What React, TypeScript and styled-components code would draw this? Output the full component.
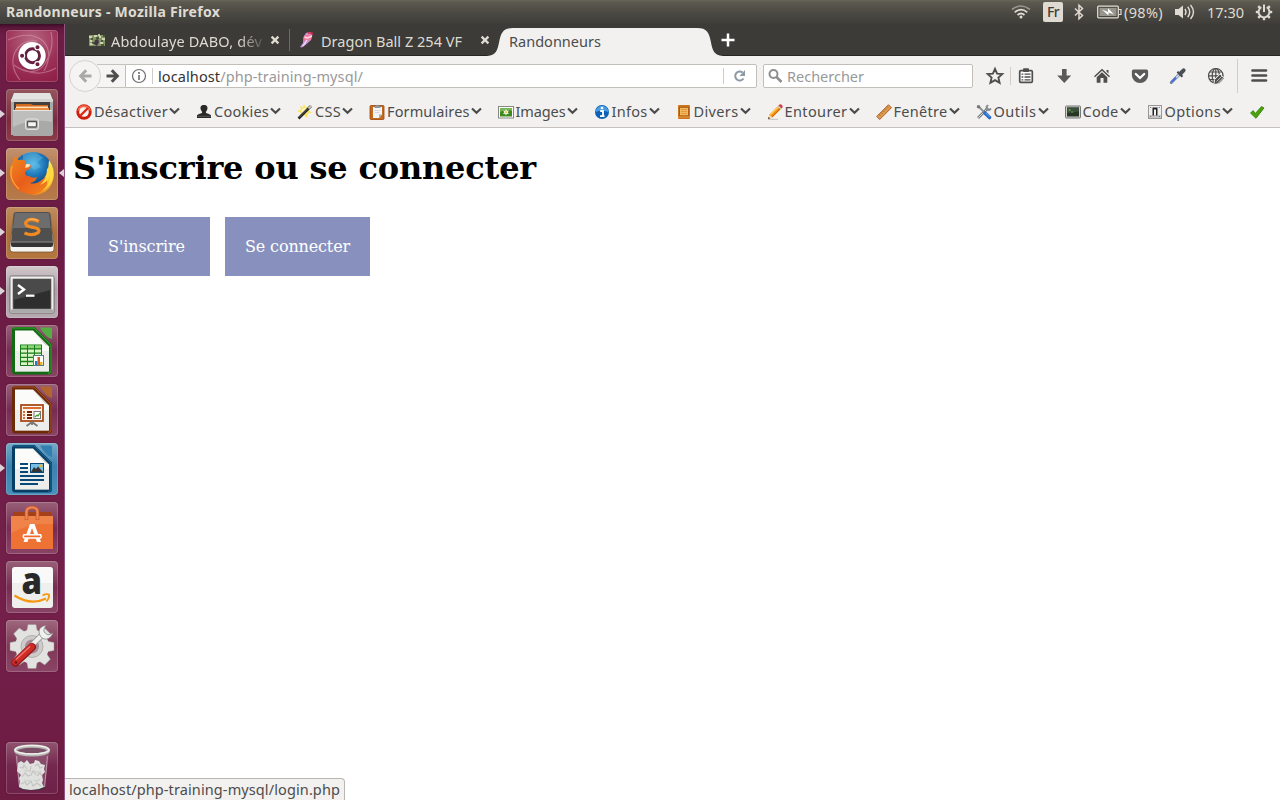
import React, { useLayoutEffect, useRef, useState } from "react";
import styled, { createGlobalStyle, css } from "styled-components";

const GlobalStyle = createGlobalStyle`
  * { box-sizing: border-box; }
  html, body { margin: 0; padding: 0; background: #fff; }
  body { overflow: hidden; font-family: "Noto Sans", "Open Sans", sans-serif; font-size: 14.5px; }
  svg { display: block; flex: none; overflow: visible; }
`;

/* ---------- text that keeps a fixed advance width ---------- */

const FitBox = styled.span<{ $w: number }>`
  display: block;
  flex: none;
  width: ${(p) => p.$w}px;
  white-space: pre;
  overflow: visible;
`;

function Fit({ w, children }: { w: number; children: React.ReactNode }) {
  const ref = useRef<HTMLSpanElement>(null);
  const [spacing, setSpacing] = useState(0);
  useLayoutEffect(() => {
    const el = ref.current;
    if (!el) return;
    const n = (el.textContent || "").length;
    setSpacing((w - el.getBoundingClientRect().width) / n);
  }, [w]);
  return (
    <FitBox $w={w}>
      <span ref={ref} style={{ letterSpacing: spacing }}>{children}</span>
    </FitBox>
  );
}

/* ---------- frame ---------- */

const Desktop = styled.div`
  width: 1280px;
  height: 800px;
  display: flex;
  flex-direction: column;
  overflow: hidden;
`;

const Panel = styled.header`
  height: 24px;
  flex: none;
  display: flex;
  align-items: center;
  padding-left: 6px;
  color: #dfdbd2;
  line-height: 24px;
  background: linear-gradient(#68655a 0, #5c594f 2px, #4b4943 13px, #3e3d39 24px);
`;

const WindowTitle = styled.div`
  flex: 1;
  font-weight: 700;
  font-size: 14px;
`;

const Indicators = styled.div`
  width: 269px;
  height: 24px;
  display: flex;
  align-items: center;
  line-height: 22px;
`;

const Indicator = styled.div<{ $w: number }>`
  width: ${(p) => p.$w}px;
  flex: none;
  display: flex;
`;

const LangBadge = styled.div`
  width: 20px;
  height: 20px;
  border-radius: 2px;
  background: #dfdbd2;
  color: #3d3c38;
  font-size: 14px;
  font-weight: 500;
  line-height: 20px;
  padding-left: 4px;
`;

const Body = styled.div`
  flex: 1;
  min-height: 0;
  display: flex;
`;

/* ---------- launcher ---------- */

const Launcher = styled.nav`
  width: 65px;
  flex: none;
  display: flex;
  flex-direction: column;
  gap: 7px;
  padding: 6px 0 6px 6px;
  border-right: 1px solid #8f5580;
  background: linear-gradient(#3c0d28 0, #64193f 5px, #6d1d45 12px, #6d1d45 300px, #74204b 600px, #6c1b41);
`;

const Tile = styled.div<{ $bg: string; $end?: boolean }>`
  position: relative;
  width: 52px;
  height: 52px;
  flex: none;
  border-radius: 4px;
  background: ${(p) => p.$bg};
  box-shadow: inset 0 0 0 1px rgba(255, 255, 255, 0.18), 0 0 2px rgba(0, 0, 0, 0.25);
  ${(p) => p.$end && css`margin-top: auto;`}
`;

const Pip = styled.i<{ $right?: boolean }>`
  position: absolute;
  top: 21px;
  ${(p) => (p.$right ? "left: 53px;" : "left: -6px;")}
  border: solid transparent;
  border-width: 4.5px 0;
  ${(p) => (p.$right ? "border-right: 5px solid #dcd3d8;" : "border-left: 5px solid #dcd3d8;")}
`;

/* ---------- browser ---------- */

const Browser = styled.div`
  position: relative;
  flex: 1;
  min-width: 0;
  display: flex;
  flex-direction: column;
  color: #4c4c4c;
`;

const TabStrip = styled.div`
  height: 32px;
  flex: none;
  display: flex;
  align-items: center;
  padding: 0 0 0 24px;
  color: #dfdbd2;
  background: #3c3b37;
  box-shadow: inset 0 -1px #272623;
`;

const Tab = styled.div<{ $w: number }>`
  width: ${(p) => p.$w}px;
  height: 32px;
  flex: none;
  display: flex;
  align-items: center;
  position: relative;
`;

const TabTitle = styled.div<{ $w: number; $ml: number; $mr: number; $fade?: boolean }>`
  width: ${(p) => p.$w}px;
  margin: 0 ${(p) => p.$mr}px 0 ${(p) => p.$ml}px;
  position: relative;
  height: 28px;
  line-height: 30px;
  flex: none;
  ${(p) => p.$fade && css`mask-image: linear-gradient(90deg, #000 128px, transparent 156px);`}
`;

const TabDivider = styled.div`
  width: 1px;
  height: 22px;
  margin-right: 10px;
  background: #6b6963;
`;

const ActiveTab = styled(Tab)`
  color: #4c4c4c;
`;

const ActiveShape = styled.svg`
  position: absolute;
  left: -7px;
  top: 0;
`;

const NavBar = styled.div`
  height: 40px;
  flex: none;
  display: flex;
  align-items: center;
  padding-left: 4px;
  background: #f2f1f0;
`;

const BackButton = styled.div`
  width: 32px;
  height: 32px;
  flex: none;
  display: flex;
  align-items: center;
  justify-content: center;
  border: 1px solid #d5d3d0;
  border-radius: 50%;
  background: #f5f4f3;
  position: relative;
`;

const ForwardButton = styled.div`
  width: 28px;
  height: 24px;
  flex: none;
  margin-left: -4px;
  padding-left: 9px;
  display: flex;
  align-items: center;
  border: solid #c6c3bf;
  border-width: 1px 0;
  background: #f6f5f4;
`;

const Field = styled.div<{ $w: number }>`
  width: ${(p) => p.$w}px;
  height: 24px;
  flex: none;
  display: flex;
  align-items: center;
  border: 1px solid #c2bfbb;
  border-radius: 0 2px 2px 0;
  background: #fff;
  line-height: 22px;
  color: #999;
`;

const SearchField = styled(Field)`
  margin-left: 6px;
  border-radius: 2px;
  padding-left: 4px;
  gap: 4px;
`;

const Host = styled.span`
  color: #333;
`;

const Rule = styled.div<{ $h: number; $l: number; $r: number }>`
  width: 1px;
  height: ${(p) => p.$h}px;
  margin: 0 ${(p) => p.$r}px 0 ${(p) => p.$l}px;
  flex: none;
  background: #cfccc9;
`;

const Actions = styled.div`
  display: flex;
  align-items: center;
  gap: 18px;
  margin-left: 1px;
`;

const Spacer = styled.div`
  flex: 1;
`;

const DevBar = styled.div`
  height: 32px;
  flex: none;
  display: flex;
  gap: 16px;
  align-items: center;
  padding-left: 11px;
  border-bottom: 1px solid #c5c2be;
  background: #f2f1f0;
`;

const DevItem = styled.div`
  display: flex;
  align-items: center;
  flex: none;
`;

const DevLabel = styled.div<{ $w: number }>`
  width: ${(p) => p.$w}px;
  height: 24px;
  line-height: 22px;
  margin-left: 2px;
`;

const Page = styled.main`
  flex: 1;
  padding: 21px 8px 0;
  background: #fff;
  font-family: "DejaVu Serif", serif;
`;

const Heading = styled.h1`
  margin: 0;
  height: 38px;
  line-height: 38px;
  font-size: 32px;
  font-weight: 700;
  color: #000;
`;

const Buttons = styled.div`
  display: flex;
  gap: 15px;
  margin: 30px 0 0 15px;
`;

const Button = styled.a<{ $w: number }>`
  width: ${(p) => p.$w}px;
  height: 59px;
  padding: 20px;
  font-size: 16px;
  line-height: 19px;
  white-space: nowrap;
  color: #fff;
  background: #8891be;
`;

const Status = styled.div`
  position: absolute;
  left: 0;
  bottom: 0;
  width: 280px;
  height: 22px;
  padding-left: 4px;
  line-height: 21px;
  border: solid #b9b6b2;
  border-width: 1px 1px 0 0;
  border-radius: 0 4px 0 0;
  background: #f2f1f0;
`;

/* ---------- small icons ---------- */

const Cross = ({ color = "#dfdbd2" }: { color?: string }) => (
  <svg width="10" height="10" viewBox="0 0 10 10">
    <path d="M1.6 1.6 8.4 8.4M8.4 1.6 1.6 8.4" stroke={color} strokeWidth="2.3" />
  </svg>
);

const Chevron = () => (
  <svg width="11" height="10" viewBox="0 0 11 10">
    <path d="M1 1.500 5.500 5.700 10 1.500" fill="none" stroke="#4b4b4b" strokeWidth="2.200" />
  </svg>
);

const Arrow = ({ color, back }: { color: string; back?: boolean }) => (
  <svg width="14" height="14" viewBox="0 0 14 14">
    <g transform={back ? "matrix(-1 0 0 1 14 0)" : undefined} fill="none" stroke={color}>
      <path d="M.5 7H11" strokeWidth="3" />
      <path d="M5.800 1.200 11.300 7 5.800 12.800" strokeWidth="3" />
    </g>
  </svg>
);

const g = "#4e4e4e";

const devIcons: Record<string, React.ReactNode> = {
  stop: (
    <>
      <circle cx="8" cy="8" r="7.7" fill="#cf1d0c" />
      <path d="M1.3 7A6.8 6.8 0 0 1 14.7 7Q8 3 1.3 7" fill="#f36b4d" />
      <circle cx="8" cy="8" r="4.8" fill="#f8f4f2" />
      <path d="M4 12 12 4" stroke="#dc2a14" strokeWidth="2.4" />
    </>
  ),
  person: (
    <>
      <path d="M8 1c3 0 3.8 2 3.4 4-.3 1.700-1.700 2.300-1.500 3.700.2 1 4.600 1 5.100 2.800V14H1v-2.500C1.500 9.700 6 9.700 6.100 8.700 6.300 7.300 4.900 6.700 4.600 5 4.200 3 5 1 8 1Z" fill="#292929" />
      <path d="M1.500 12.300h13" stroke="#666" strokeWidth=".8" />
    </>
  ),
  wand: (
    <>
      <path d="m7 0 1.500 3.400L13 2l-1.500 4L15 9l-4 .5L10 14 7 11l-4 2 .8-4L0 7l4-1.500L3 2l3 1.500Z" fill="#fbe35c" />
      <circle cx="7.500" cy="7" r="3" fill="#fff9bd" />
      <path d="M1.500 14.500 14 2" stroke="#222" strokeWidth="2.600" />
      <path d="m11.500 4.500 3-3" stroke="#c9c9c9" strokeWidth="2" />
      <path d="M2 13.500 11 4.500" stroke="#777" strokeWidth=".7" />
    </>
  ),
  form: (
    <>
      <rect x="1" y="1.500" width="14" height="14" rx="1" fill="#c46a1d" stroke="#98480c" strokeWidth=".8" />
      <path d="M4 3h9v7.500L10 14H4Z" fill="#f4f5f7" />
      <path d="M10 14v-3.500h3Z" fill="#aab0b8" />
      <path d="M5.500 4V2h1.700a1.300 1.300 0 0 1 2.600 0h1.700v2Z" fill="#8f959c" />
      <path d="M5.500 6.500h6M5.500 8.500h5" stroke="#c8ccd2" strokeWidth=".7" />
    </>
  ),
  image: (
    <>
      <rect x=".5" y="2.500" width="15" height="11.500" fill="#fff" stroke="#858783" />
      <rect x="2" y="4" width="12" height="8.500" fill="#3f8a20" />
      <path d="M2 4h12v3Q8 4 2 8Z" fill="#79b655" />
      <path d="m8 5 .9 1.800 2.100-.3-1.300 1.700 1.300 1.600-2.200-.1L8 11.500 7.100 9.700 5 9.800l1.300-1.600L5 6.500l2.100.3Z" fill="#fff" />
      <circle cx="8" cy="8.200" r="1.100" fill="#f2ca24" />
    </>
  ),
  info: (
    <>
      <circle cx="8" cy="8" r="7" fill="#0c61b5" />
      <path d="M1.700 8a6.300 6.300 0 0 1 12.600 0Q8 5 1.700 8" fill="#4a9de5" />
      <circle cx="8" cy="4" r="1.300" fill="#fff" />
      <path d="M6.200 7h2.800v5M6 12.200h4.500" stroke="#fff" strokeWidth="1.800" fill="none" />
    </>
  ),
  misc: (
    <>
      <rect x="2" y="1" width="12" height="14" rx="1" fill="#cb761f" />
      <rect x="3.500" y="3.300" width="9" height="8.500" fill="#f3b95e" stroke="#a9570d" strokeWidth=".9" />
      <path d="M5 5.500h6M5 7.500h6M5 9.500h6" stroke="#d99336" strokeWidth=".8" />
      <path d="M2 13h12" stroke="#f0a44c" strokeWidth=".8" />
    </>
  ),
  pencil: (
    <>
      <path d="M1 15.300h10" stroke="#bbb" strokeWidth=".9" />
      <path d="M1 15 2.500 10.500 11.500 1.500 14.500 4.500 5.500 13.500Z" fill="#f18c12" />
      <path d="m3.700 10.500 8-8" stroke="#ffd05a" strokeWidth="1.400" />
      <path d="m5 13 8.300-8.300" stroke="#c4600a" strokeWidth=".8" />
      <path d="m1 15 1.500-4.500 3 3Z" fill="#f2dcae" />
      <path d="m1 15 .7-2 1.300 1.300Z" fill="#222" />
      <path d="m10.500 2.500 1-1 3 3-1 1Z" fill="#ccc" />
      <path d="m11.500 1.500 1-1q1.500-.6 2.500.5t.5 2.500l-1 1Z" fill="#d43e48" />
    </>
  ),
  ruler: (
    <>
      <path d="M.7 12.500 12.500.7 15.500 3.700 3.700 15.500Z" fill="#dd9a52" stroke="#a35a1c" strokeWidth=".9" />
      <path d="m3 10.500 1.300 1.300M5 8.500l1.300 1.300M7 6.500l1.300 1.300M9 4.500l1.300 1.300M11 2.500l1.300 1.300" stroke="#8c4a12" strokeWidth=".7" />
    </>
  ),
  tools: (
    <>
      <path d="M2 14 12 4" stroke="#777b7c" strokeWidth="2.600" />
      <path d="M2 14 12 4" stroke="#d5d8d8" strokeWidth="1" />
      <path d="M10 3.500 12 1M15 4.500 12.500 6.500M10 3.500l2.500 3" stroke="#858989" strokeWidth="2" fill="none" />
      <path d="M2.500 2.500 9 9" stroke="#8b8f90" strokeWidth="1.800" />
      <path d="M1 1.500 3.500 1 4.500 3.500 3 4.500.8 3.800Z" fill="#777" />
      <path d="m9 9 4.500 4.500" stroke="#2a6bc5" strokeWidth="3.600" strokeLinecap="round" />
      <path d="m9.500 8.800 4 4" stroke="#71a6ed" strokeWidth="1" />
    </>
  ),
  code: (
    <>
      <rect x=".5" y="2" width="15" height="12" rx=".8" fill="#cfcfcb" stroke="#777" />
      <rect x="2" y="3.500" width="12" height="9" fill="#263728" />
      <path d="M2 3.500h12v4L2 9Z" fill="#3b4e3d" />
      <path d="m3.500 5 2 1-2 1M6 8h2.500" stroke="#6db82f" strokeWidth=".8" fill="none" />
    </>
  ),
  options: (
    <>
      <rect x="1.500" y="1.500" width="13" height="13" fill="#eee" stroke="#989898" />
      <path d="M2 11h12v3H2Z" fill="#c4c4c4" />
      <rect x="5.500" y="3.500" width="5" height="8" fill="#222" />
      <rect x="7" y="5.500" width="2" height="6" fill="#f5f5f5" />
      <path d="M3.200 3.500h1M11.800 3.500h1M3.200 12.500h1M11.800 12.500h1" stroke="#666" />
    </>
  ),
  check: <path d="M1.500 9 4.200 6.600 6.300 9.500 12.500 2.500 15 4 7 14.300Z" fill="#4ba30e" stroke="#2d7902" strokeWidth=".8" />,
};

const DevIcon = ({ name }: { name: string }) => (
  <svg width="16" height="16" viewBox="0 0 16 16">{devIcons[name]}</svg>
);

const devItems: [string, string, number][] = [
  ["stop", "Désactiver", 75],
  ["person", "Cookies", 56],
  ["wand", "CSS", 27],
  ["form", "Formulaires", 83.5],
  ["image", "Images", 51],
  ["info", "Infos", 37],
  ["misc", "Divers", 46],
  ["pencil", "Entourer", 64],
  ["ruler", "Fenêtre", 55],
  ["tools", "Outils", 44],
  ["code", "Code", 37],
  ["options", "Options", 57.5],
];

const actionIcons: React.ReactNode[] = [
  <>
    <rect x="3.700" y="4.700" width="12.600" height="11.600" rx="1" fill="#fff" stroke={g} strokeWidth="1.700" />
    <rect x="7" y="2.300" width="6" height="3.700" rx="1" fill={g} />
    <path d="M5.500 8.200h1.800M8.500 8.200h6M5.500 11h1.800M8.500 11h6M5.500 13.800h1.800M8.500 13.800h6" stroke={g} strokeWidth="1.300" />
  </>,
  <path d="M8 3h4.600v6.500h4.600L10.300 17 3.200 9.500H8Z" fill="#5a5a5a" />,
  <path d="M10 2.800 18 10.300 17 11.300 10 4.800 3 11.300 2 10.300ZM14.500 4h2v3.500l-2-1.900ZM4.700 11.200 10 6.300 15.300 11.200v5.500H11.500V12H8.500V16.700H4.700Z" fill={g} />,
  <>
    <path d="M3.500 3.400h13q1.600 0 1.600 1.600v4.500a8.100 7.600 0 0 1-16.200 0V5q0-1.600 1.600-1.600Z" fill="#5a5a5a" />
    <path d="m5.800 8 4.200 4 4.200-4" fill="none" stroke="#fff" strokeWidth="2.300" strokeLinecap="round" />
  </>,
  <>
    <path d="M3.300 16.500 11.500 8.300" stroke="#6d7b94" strokeWidth="3" strokeLinecap="round" />
    <path d="m3.600 16.200 7.400-7.400" stroke="#d2e2f8" strokeWidth="1.500" />
    <path d="m3.600 16.200 4.500-4.500" stroke="#3f6bdc" strokeWidth="1.800" />
    <path d="m9.400 5.700 5 5" stroke="#40464e" strokeWidth="2.200" />
    <path d="M12.500 7.500 15.600 4.300" stroke="#4a5057" strokeWidth="4" strokeLinecap="round" />
  </>,
  <>
    <g fill="none" stroke={g} strokeWidth="1.200">
      <circle cx="9.800" cy="9.800" r="7.300" />
      <ellipse cx="9.800" cy="9.800" rx="3.600" ry="7.300" />
      <path d="M9.800 2.500v14.600M2.500 9.800h14.600M3.700 6h12.200M3.700 13.500h12.200" />
    </g>
    <path d="m7.800 18.500.8-5 5.500-5.500 4.200 4.200-5.500 5.500Z" fill={g} stroke="#f2f1f0" strokeWidth="1" />
    <path d="m10.500 15.500 5.500-5.500M12 16.700l5.300-5.200" stroke="#d7d7d7" strokeWidth=".8" />
  </>,
];

/* ---------- launcher icons ---------- */

const OfficeDoc = ({ dark, mid, light, children }: { dark: string; mid: string; light: string; children: React.ReactNode }) => (
  <>
    <path d="M9 2H28.500L46 19.500V46Q46 49.500 43 49.500H9Q6 49.500 6 46V5Q6 2 9 2Z" fill={dark} />
    <path d="M7 3H28L45 20V45.500Q45 48.500 42 48.500" fill="none" stroke={mid} strokeWidth="1" />
    <path d="M34 2.500H44.500Q46 2.500 46 4V14Q40 13 34 2.500Z" fill={light} />
    <path d="M9 5.500H27L43 21.500V46.500H9Z" fill="#fbfbfa" />
    <path d="M9 26H43V46.500H9Z" fill="#e4e4e3" opacity=".6" />
    <path d="M27 5.500 43 21.500 39 19.500Z" fill="#c8c8c6" />
    {children}
  </>
);

type App = { bg: string; pips?: number; art: React.ReactNode };

const dim = "linear-gradient(#986078, #762c51 50%, #8a4465)";

const apps: App[] = [
  {
    bg: "radial-gradient(circle at 50% 20%, #b76882, #9c3157 55%, #8c1c45)",
    art: (
      <>
        <g fill="none" stroke="#dca2b5" strokeWidth="1.200" opacity=".5">
          <path d="M2 10Q24 0 37 11Q48 23 38 41" />
          <path d="M45 2Q49 22 36 37Q24 47 8 35" />
          <path d="M14 50Q3 36 9 22Q16 9 31 11" />
          <path d="M50 38Q34 47 18 40" />
        </g>
        <circle cx="26" cy="26.500" r="14.300" fill="#5b1535" opacity=".35" />
        <circle cx="26" cy="25.700" r="13.700" fill="#fff" />
        <circle cx="26.500" cy="25.700" r="7" fill="none" stroke="#64203f" strokeWidth="2.900" />
        <g fill="#64203f" stroke="#fff" strokeWidth="1.100">
          <circle cx="16.100" cy="25.700" r="2.600" />
          <circle cx="31.500" cy="17.200" r="2.600" />
          <circle cx="31.500" cy="34.200" r="2.600" />
        </g>
      </>
    ),
  },
  {
    bg: "linear-gradient(#94555d, #7c2b3e 60%, #8b3d49)",
    pips: 1,
    art: (
      <>
        <path d="M8 4H44L47 11V46H5V11Z" fill="#aaa" />
        <path d="M8 4H44L46 10H6Z" fill="#e3e3e2" />
        <rect x="5" y="10" width="42" height="3" fill="#d3d3d2" />
        <rect x="8" y="13" width="36" height="10" fill="#44403e" />
        <path d="M10 15h15l2 1h15v7H10Z" fill="#d2691e" />
        <path d="M10 17.500h32v5H10Z" fill="#ffe0b8" />
        <path d="M9 19h34v4H9Z" fill="#ed8c3c" />
        <rect x="7" y="21" width="39" height="26" rx="1" fill="#a9a9a8" />
        <path d="M7 21h39v12Q26 29 7 38Z" fill="#bebebd" />
        <path d="M7 21.500h39" stroke="#e4e4e4" />
        <rect x="19.500" y="30" width="13" height="10.500" rx="2" fill="#bdbdbc" stroke="#e4e4e4" />
        <rect x="21.500" y="32.500" width="9" height="5.500" rx=".8" fill="#f4f4f3" stroke="#555" strokeWidth="1.300" />
      </>
    ),
  },
  {
    bg: "linear-gradient(#c39270, #b17243 50%, #b77a4a)",
    pips: 2,
    art: (
      <>
        <defs>
          <radialGradient id="globe" cx=".5" cy=".3" r=".6"><stop offset="0" stopColor="#55b8e5" /><stop offset=".5" stopColor="#1d76b8" /><stop offset="1" stopColor="#0a3770" /></radialGradient>
          <linearGradient id="fox" x1="0" y1="0" x2="1" y2="1"><stop offset="0" stopColor="#f08a1e" /><stop offset=".5" stopColor="#e85d1c" /><stop offset="1" stopColor="#f4851e" /></linearGradient>
          <linearGradient id="tail" x1="0" y1="0" x2="0" y2="1"><stop offset="0" stopColor="#ffef62" /><stop offset=".6" stopColor="#fdc22d" /><stop offset="1" stopColor="#f08a1c" /></linearGradient>
        </defs>
        <circle cx="27" cy="24" r="20" fill="url(#globe)" />
        <path d="M17 6Q24 2 31 5L37 10 31 14 35 19 28 22 23 16 17 14Z" fill="#74c7e9" opacity=".35" />
        <path d="M43 12Q49 20 47.500 30Q44 47 26 47Q35 42 38 31L42 23Z" fill="url(#tail)" />
        <path d="M9 9Q11 7.500 12 12Q17 11 20 13L20 16Q22 17 25 17L24 21Q19 22 19 25Q19 28 23 28Q27 31 31 29Q30 34 24 35Q30 37 37 31Q39 30 39 28Q44 35 38 41Q31 48 22 46Q6 43 4 28Q3 19 7 14Q7 11 9 9Z" fill="url(#fox)" />
        <path d="M41 21Q41 31 34 37Q42 34 44 27Q45 36 36 43Q46 38 47.500 27L44 18Z" fill="#ffd942" />
        <path d="M20 16Q22 15 24.500 17L23 19 19 20Z" fill="#ffe1b2" />
        <path d="M6 18Q2 31 13 41" stroke="#f9a53a" fill="none" strokeWidth="1.300" />
      </>
    ),
  },
  {
    bg: "linear-gradient(#bf8d5e, #ae713c 50%, #b4763f)",
    pips: 1,
    art: (
      <>
        <path d="M8 7H44L48 38V42Q48 45 45 45H7Q4 45 4 42V38Z" fill="#f5f3f0" stroke="#6b4a2c" strokeWidth=".7" />
        <path d="M10 5H42Q44 5 44.300 7L47 35H5L7.700 7Q8 5 10 5Z" fill="#4f4f4f" />
        <path d="M9 6H43L44.500 21H7Z" fill="#7a7a7a" opacity=".7" />
        <path d="M5 35H47V38Q47 40 45 40H7Q5 40 5 38Z" fill="#343434" />
        <path d="M5 35H47" stroke="#8d8d8d" />
        <path d="M33 14.500Q27 11.500 22.500 13Q18 15.500 20.500 18.300Q23 20 28 20.500Q35 22 32 25.700Q26.500 29.500 18.500 26" fill="none" stroke="#f28a22" strokeWidth="3.300" />
        <path d="M32 13.500Q27 11 22.500 12.500" fill="none" stroke="#ffc16c" strokeWidth="1" />
      </>
    ),
  },
  {
    bg: "linear-gradient(#d2c8cc, #aca0a6 45%, #b6a9af)",
    pips: 1,
    art: (
      <>
        <rect x="4" y="10" width="44" height="37" rx="1.500" fill="#f1f1ef" stroke="#5e595b" strokeWidth=".8" />
        <path d="M4.500 43.500h43v3h-43Z" fill="#aaa" />
        <rect x="7" y="13" width="38" height="30" fill="#2d2e2d" stroke="#777" strokeWidth=".8" />
        <path d="M7.500 13.500h37V24L7.500 34Z" fill="#494a49" />
        <path d="M12 19 18 23.500 12 28" fill="none" stroke="#fff" strokeWidth="2.400" />
        <path d="M20 29.700h8.500" stroke="#fff" strokeWidth="2.200" />
      </>
    ),
  },
  {
    bg: dim,
    art: (
      <OfficeDoc dark="#126b13" mid="#36a12c" light="#56ad42">
        <rect x="14" y="19.500" width="22" height="21.500" fill="#197b19" />
        {[20.3, 24.5, 28.7, 32.9, 37.1].map((y, i) => (
          <path key={y} d={`M15 ${y + 1.5}h6M22 ${y + 1.5}h6M29 ${y + 1.5}h6`} stroke={i ? "#d9f4c5" : "#8cd574"} strokeWidth="2.900" />
        ))}
        <rect x="27.500" y="30.500" width="10" height="10" fill="#fff" stroke="#557b86" />
        <path d="M29 40v-4h2.500v4Z" fill="#207abd" />
        <path d="M31.500 40v-8h2.500v8Z" fill="#d85a25" />
        <path d="M34 40v-3h2.500v3Z" fill="#e9b423" />
      </OfficeDoc>
    ),
  },
  {
    bg: dim,
    art: (
      <OfficeDoc dark="#6e2b08" mid="#a9521f" light="#b36531">
        <rect x="15" y="21" width="22" height="16" fill="#fff2e8" stroke="#a74b19" strokeWidth="1.800" />
        <path d="M17 24h18" stroke="#d76e36" strokeWidth="2" />
        <path d="M17 28h2M17 31h2M17 34h2" stroke="#d76e36" strokeWidth="2" />
        <path d="M21 28h5M21 31h5M21 34h5" stroke="#6f2504" strokeWidth="1.900" />
        <rect x="28" y="27.500" width="6.500" height="7" fill="#fff" stroke="#777" strokeWidth="1" />
        <path d="m29 33 2-2 1 1 2-3" stroke="#38a431" strokeWidth="1.200" fill="none" />
        <path d="m26 38-5.500 4M26 38l5.500 4M26 38v3" stroke="#777" strokeWidth="1.800" />
      </OfficeDoc>
    ),
  },
  {
    bg: "linear-gradient(#76a9c7, #3b82b0 45%, #4a91ba)",
    pips: 1,
    art: (
      <OfficeDoc dark="#073e66" mid="#1c6795" light="#3380b0">
        <path d="M14 21h8M14 25h8M14 29h8M14 33h24M14 37h24M14 41h18" stroke="#074978" strokeWidth="2" />
        <rect x="24.500" y="20.500" width="13" height="9" fill="#76bce5" stroke="#074978" />
        <path d="m25 29 3-5 2 2 2-2.500 5 5.500Z" fill="#333" />
        <circle cx="35" cy="22.700" r="1.500" fill="#e9b52d" />
      </OfficeDoc>
    ),
  },
  {
    bg: dim,
    art: (
      <>
        <path d="M7 10H45V15H7Z" fill="#a4401a" />
        <path d="M5 14H47V47H5Z" fill="#ee7233" />
        <path d="M5 14H47V22Q26 20 5 31Z" fill="#f0834a" />
        <path d="M20.500 18V10Q20.500 5.500 26 5.500T31.500 10V18" fill="none" stroke="#c9572a" strokeWidth="3.600" />
        <path d="M20.500 17.500V10Q20.500 5.500 26 5.500T31.500 10V17.500" fill="none" stroke="#ee8655" strokeWidth="2.200" />
        <path d="M24 22h4.500L35 40h-4L26 26 21.500 40h-4Z" fill="#fff" />
        <path d="M18 32.700h16.500q1.500 1.800 0 3.300H18q-1.500-1.600 0-3.300Z" fill="#ee6a27" stroke="#fff" strokeWidth="1.400" />
      </>
    ),
  },
  {
    bg: dim,
    art: (
      <>
        <rect x="6" y="6" width="41" height="41" rx="3" fill="#efefee" />
        <path d="M6 10q0-4 4-4h33q4 0 4 4v12H6Z" fill="#f9f9f9" />
        <text x="15.500" y="33" fontFamily="Open Sans, sans-serif" fontSize="37" fontWeight="800" fill="#292929" textLength="20.500" lengthAdjust="spacingAndGlyphs">a</text>
        <path d="M8.500 34.500Q25 45 40 37.500" fill="none" stroke="#f59712" strokeWidth="2.300" />
        <path d="M36.500 34.500Q40 32.500 43 33.500Q43.500 37 40.500 40.500" fill="none" stroke="#f59712" strokeWidth="1.800" />
      </>
    ),
  },
  {
    bg: "linear-gradient(#9e687d, #803756 50%, #8a4465)",
    art: (
      <>
        <g fill="#e2e2e0" stroke="#959290" strokeWidth=".5">
          {[0, 45, 90, 135, 180, 225, 270, 315].map((a) => (
            <path key={a} d="M20.500 12 22 4.500H30L31.500 12Z" transform={`rotate(${a} 26 26.500)`} />
          ))}
        </g>
        <circle cx="26" cy="26.500" r="17" fill="#e2e2e0" />
        <circle cx="26" cy="26.500" r="11" fill="#cecbca" stroke="#b2b0af" />
        <circle cx="26" cy="26.500" r="7" fill="#a88a94" />
        <path d="M19 32 36 15" stroke="#8d8d8c" strokeWidth="6" />
        <path d="M20 31 37 14" stroke="#efefee" strokeWidth="4.500" />
        <path d="M40 5.500Q34 6 33 11Q33 17 38 19Q44 20 47 13L42 15 38 12 38 9Z" fill="#f0f0ef" stroke="#858585" strokeWidth=".8" />
        <path d="M9.500 42.500 26 27" stroke="#861919" strokeWidth="8" strokeLinecap="round" />
        <path d="M9.500 42 25.500 26.800" stroke="#ce2b27" strokeWidth="6.500" strokeLinecap="round" />
        <path d="M10 39.500 24 26.500" stroke="#ef7870" strokeWidth="1.300" />
        <circle cx="10" cy="42.500" r="1.300" fill="#671515" />
      </>
    ),
  },
];

const trash = (
  <>
    <path d="M9 11H43L39 45Q39 48 26 48T13 45Z" fill="#9c6f86" opacity=".45" />
    <path d="M10.500 14 13.500 45M41.500 14 38.500 45" stroke="#d5bcc8" strokeWidth=".7" />
    <ellipse cx="26" cy="46" rx="13" ry="2.300" fill="#3b353a" />
    <path d="m12 21 3-2 3 2 3-3 3 4 4-1 1-3 4 1 2 3 4 1-1 4 1 3-3 3 1 5-1 3 2 4-5 2-8 1-8-1-4-2 1-5-1-4 2-3-4-4 1-4Z" fill="#e0e1df" />
    <path d="m14 25 3 1 1-3 3 4M29 24l3-2 2 4 3-1M16 35l3-4 3 3 3-1 2-4 3 4M31 34l3-3 2 3M15 42l4-2 2 3 4-4 2 5 4-3 4 3M25 24l-1 6" fill="none" stroke="#c3c5c2" strokeWidth="1.200" />
    <path d="M18 28q3 2 5 0M28 29q4 3 7 0M18 38q3 2 6 0M28 38q3 2 6-1" fill="none" stroke="#cdcfcc" strokeWidth="1.500" />
    <ellipse cx="26" cy="8.500" rx="16.500" ry="4.300" fill="#7b4f66" stroke="#b7b8b4" strokeWidth="3.300" />
    <ellipse cx="26" cy="7.800" rx="17" ry="4.300" fill="none" stroke="#eeefeb" strokeWidth="1.500" />
  </>
);

const AppTile = ({ app, end }: { app: App; end?: boolean }) => (
  <Tile $bg={app.bg} $end={end}>
    <svg width="52" height="52" viewBox="0 0 52 52">{app.art}</svg>
    {app.pips ? <Pip /> : null}
    {app.pips === 2 ? <Pip $right /> : null}
  </Tile>
);

/* ---------- page ---------- */

export default function App() {
  return (
    <Desktop>
      <GlobalStyle />
      <Panel>
        <WindowTitle><Fit w={214}>Randonneurs - Mozilla Firefox</Fit></WindowTitle>
        <Indicators>
          <Indicator $w={32}>
            <svg width="20" height="14" viewBox="0 0 20 14" fill="none" stroke="#dfdbd2" strokeWidth="1.700">
              <path d="M1 4.500Q10-2.500 19 4.500" opacity=".5" />
              <path d="M3.700 7.300Q10 2 16.300 7.300" />
              <path d="M6.500 10Q10 7 13.500 10" />
              <circle cx="10" cy="12" r="1.500" fill="#dfdbd2" stroke="none" />
            </svg>
          </Indicator>
          <Indicator $w={31}><LangBadge><Fit w={12}>Fr</Fit></LangBadge></Indicator>
          <Indicator $w={23}>
            <svg width="10" height="16" viewBox="0 0 10 16">
              <path d="M1 4.500 8.500 11.500 5 14.700V1.300L8.500 4.500 1 11.500" fill="none" stroke="#dfdbd2" strokeWidth="1.500" />
            </svg>
          </Indicator>
          <Indicator $w={27}>
            <svg width="25" height="14" viewBox="0 0 25 14">
              <rect x=".7" y="1.200" width="20.600" height="11.600" rx="1" fill="none" stroke="#dfdbd2" strokeWidth="1.300" />
              <rect x="2.500" y="3" width="17" height="8" fill="#98958d" />
              <path d="M22 4.500h2v5h-2" fill="none" stroke="#dfdbd2" strokeWidth="1.200" />
              <path d="m5 4.500 6 2.500V3.200L17 9.500 11.500 7.500v3Z" fill="#fff" />
            </svg>
          </Indicator>
          <Indicator $w={51}><Fit w={39}>(98%)</Fit></Indicator>
          <Indicator $w={32}>
            <svg width="20" height="18" viewBox="0 0 20 18">
              <path d="M0 6h3.500L8 2.500v13L3.500 12H0Z" fill="#dfdbd2" />
              <path d="M10 6q2 3 0 6M12.700 3.800q4 5.200 0 10.400M15.500 2q6 7 0 14" fill="none" stroke="#dfdbd2" strokeWidth="1.400" />
            </svg>
          </Indicator>
          <Indicator $w={48}><Fit w={37}>17:30</Fit></Indicator>
          <svg width="18" height="18" viewBox="0 0 18 18">
            <g stroke="#dfdbd2" strokeWidth="2.400">
              {[45, 90, 135, 180, 225, 270, 315].map((a) => (
                <path key={a} d="M9 .8V4" transform={`rotate(${a} 9 9)`} />
              ))}
            </g>
            <path d="M6.300 4.300a5.400 5.400 0 1 0 5.400 0" fill="none" stroke="#dfdbd2" strokeWidth="1.900" />
            <path d="M9 1.500V9" stroke="#dfdbd2" strokeWidth="2" />
          </svg>
        </Indicators>
      </Panel>

      <Body>
        <Launcher>
          {apps.map((a, i) => <AppTile key={i} app={a} />)}
          <AppTile end app={{ bg: "linear-gradient(#905570, #74284e 45%, #6f2149)", art: trash }} />
        </Launcher>

        <Browser>
          <TabStrip>
            <Tab $w={200}>
              <svg width="16" height="11" viewBox="0 0 16 11">
                <rect width="16" height="11" fill="#849265" />
                <path d="M0 2h3M5 1h3M10 2h2M13 4h3M1 6h2M11 8h3M1 9h3M9 0h2" stroke="#e1edc8" strokeWidth="1.500" />
                <path d="M2 4h2M7 3h3M12 6h2M3 8h3M12 10h3M14 1h2" stroke="#394728" strokeWidth="1.500" />
                <path d="M6 5 9 4 10 7 8 11 5 9Z" fill="#413446" />
              </svg>
              <TabTitle $w={152} $ml={6} $mr={7} $fade><Fit w={151}>Abdoulaye DABO, dév</Fit></TabTitle>
              <Cross />
            </Tab>
            <TabDivider />
            <Tab $w={197}>
              <svg width="13" height="16" viewBox="0 0 13 16">
                <path d="M6 1 10 0 12.500 2 11 8 5.500 13 2 15.500 0 15 3 11 3.500 5Z" fill="#cb95dc" />
                <path d="M5 3 12 2 11 8 5 10 3.500 6Z" fill="#ee7b9b" />
                <path d="m4.500 5 3 1 4.500-2" stroke="#ffd8e5" strokeWidth="1.400" fill="none" />
                <path d="m3 14 4-6" stroke="#eee6ff" strokeWidth="1.200" />
                <path d="M8 1h4v2" stroke="#d5294b" strokeWidth="1.300" fill="none" />
              </svg>
              <TabTitle $w={150} $ml={8} $mr={9}><Fit w={141}>Dragon Ball Z 254 VF</Fit></TabTitle>
              <Cross />
            </Tab>
            <ActiveTab $w={224}>
              <ActiveShape width="232" height="32" viewBox="0 0 232 32">
                <path d="M-3 32C6 31.500 7.500 26 9 18.500C11 8.500 13 4 23 4H207C217 4 219 8.500 221 18.500C222.500 26 224 31.500 233 32Z" fill="#f2f1f0" />
              </ActiveShape>
              <TabTitle $w={180} $ml={12} $mr={1}><Fit w={92}>Randonneurs</Fit></TabTitle>
              <Cross color="#666" />
            </ActiveTab>
            <svg width="14" height="14" viewBox="0 0 14 14">
              <path d="M7 .5v13M.5 7h13" stroke="#fff" strokeWidth="2.500" />
            </svg>
          </TabStrip>

          <NavBar>
            <BackButton><Arrow back color="#a9a9a9" /></BackButton>
            <ForwardButton><Arrow color={g} /></ForwardButton>
            <Field $w={632}>
              <svg width="26" height="16" viewBox="0 0 26 16">
                <circle cx="13" cy="8" r="6.500" fill="none" stroke="#6b6b6b" strokeWidth="1.200" />
                <path d="M13 4v2M13 7v5" stroke="#6b6b6b" strokeWidth="1.600" />
              </svg>
              <Rule $h={16} $l={0} $r={5} />
              <Fit w={205}><Host>localhost</Host>/php-training-mysql/</Fit>
              <Spacer />
              <Rule $h={16} $l={0} $r={9} />
              <svg width="23" height="14" viewBox="0 0 23 14">
                <path d="M10.500 9.500A4.500 4.500 0 1 1 9.500 3.500" fill="none" stroke="#8d99a6" strokeWidth="2" />
                <path d="M12 1v6H6.500Z" fill="#8d99a6" />
              </svg>
            </Field>
            <SearchField $w={210}>
              <svg width="15" height="16" viewBox="0 0 15 16">
                <circle cx="5.500" cy="6" r="4" fill="none" stroke="#8e8e8e" strokeWidth="2" />
                <path d="m8.500 9 5 5" stroke="#8e8e8e" strokeWidth="2.500" />
              </svg>
              <Fit w={77}>Rechercher</Fit>
            </SearchField>
            <Rule $h={0} $l={11} $r={0} />
            <svg width="20" height="20" viewBox="0 0 20 20">
              <path d="m10 2.800 2.100 4.800 5.200.5-3.900 3.500 1.200 5.200-4.600-2.700-4.600 2.700 1.200-5.200-3.900-3.500 5.200-.5Z" fill="none" stroke={g} strokeWidth="1.900" />
            </svg>
            <Rule $h={18} $l={5} $r={4} />
            <Actions>
              {actionIcons.map((a, i) => (
                <svg key={i} width="20" height="20" viewBox="0 0 20 20">{a}</svg>
              ))}
            </Actions>
            <Rule $h={34} $l={11} $r={13} />
            <svg width="17" height="16" viewBox="0 0 17 16">
              <path d="M1.500 2.500h13.500M1.500 7.500h13.500M1.500 12.500h13.500" stroke={g} strokeWidth="2.700" strokeLinecap="round" />
            </svg>
          </NavBar>

          <DevBar>
            {devItems.map(([icon, label, w]) => (
              <DevItem key={icon}>
                <DevIcon name={icon} />
                <DevLabel $w={w}><Fit w={w - 1}>{label}</Fit></DevLabel>
                <Chevron />
              </DevItem>
            ))}
            <DevItem><DevIcon name="check" /></DevItem>
          </DevBar>

          <Page>
            <Heading><Fit w={463}>S'inscrire ou se connecter</Fit></Heading>
            <Buttons>
              <Button $w={122}><Fit w={77}>S'inscrire</Fit></Button>
              <Button $w={145}><Fit w={105}>Se connecter</Fit></Button>
            </Buttons>
          </Page>
          <Status><Fit w={271}>localhost/php-training-mysql/login.php</Fit></Status>
        </Browser>
      </Body>
    </Desktop>
  );
}
